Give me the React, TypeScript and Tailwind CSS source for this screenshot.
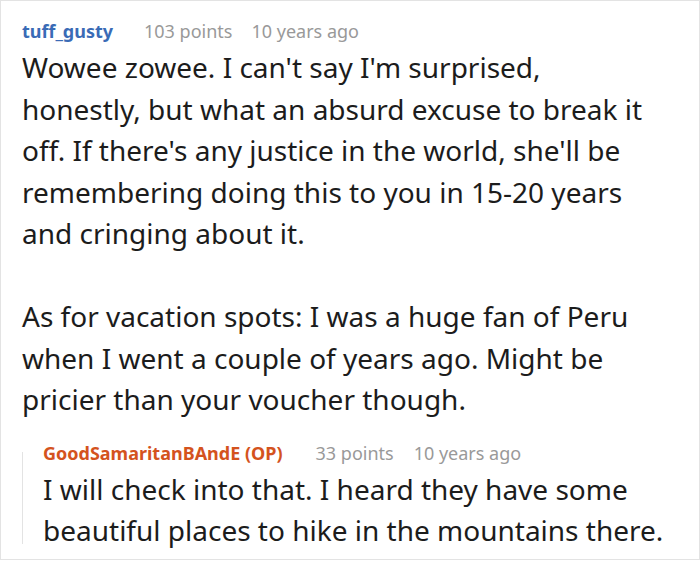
export default function App() {
  return (
    <div className="w-[700px] h-[562px] bg-white font-['Noto_Sans',sans-serif]">
      <div className="w-[700px] h-[560px] border border-[#e3e3e3] pl-[21px] pt-[17px]">
        <div className="flex items-baseline text-[18px] leading-[26px]">
          <span className="font-bold text-[#3a6bb6]">tuff_gusty</span>
          <span className="ml-[31px] text-[#999999]">103 points</span>
          <span className="ml-[19px] text-[#999999]">10 years ago</span>
        </div>
        <div className="mt-[3px] w-[640px] text-[28px] leading-[41.5px] text-[#1c1c1c]">
          <p>
            Wowee zowee. I can't say I'm surprised, honestly, but what an absurd excuse to break it
            off. If there's any justice in the world, she'll be remembering doing this to you in
            15-20 years and cringing about it.
          </p>
          <p className="mt-[41.5px]">
            As for vacation spots: I was a huge fan of Peru when I went a couple of years ago. Might
            be pricier than your voucher though.
          </p>
        </div>
        <div className="mt-[19px] w-[660px] flex">
          <div className="w-px mt-[12px] mb-[8px] bg-[#e3e3e3] shrink-0" />
          <div className="pl-[20px]">
            <div className="flex items-baseline text-[18px] leading-[26px]">
              <span className="font-bold text-[#d4531e]">GoodSamaritanBAndE (OP)</span>
              <span className="ml-[33px] text-[#999999]">33 points</span>
              <span className="ml-[20px] text-[#999999]">10 years ago</span>
            </div>
            <div className="mt-[3px] text-[28px] leading-[41.5px] text-[#1c1c1c]">
              I will check into that. I heard they have some beautiful places to hike in the
              mountains there.
            </div>
          </div>
        </div>
      </div>
    </div>
  );
}
